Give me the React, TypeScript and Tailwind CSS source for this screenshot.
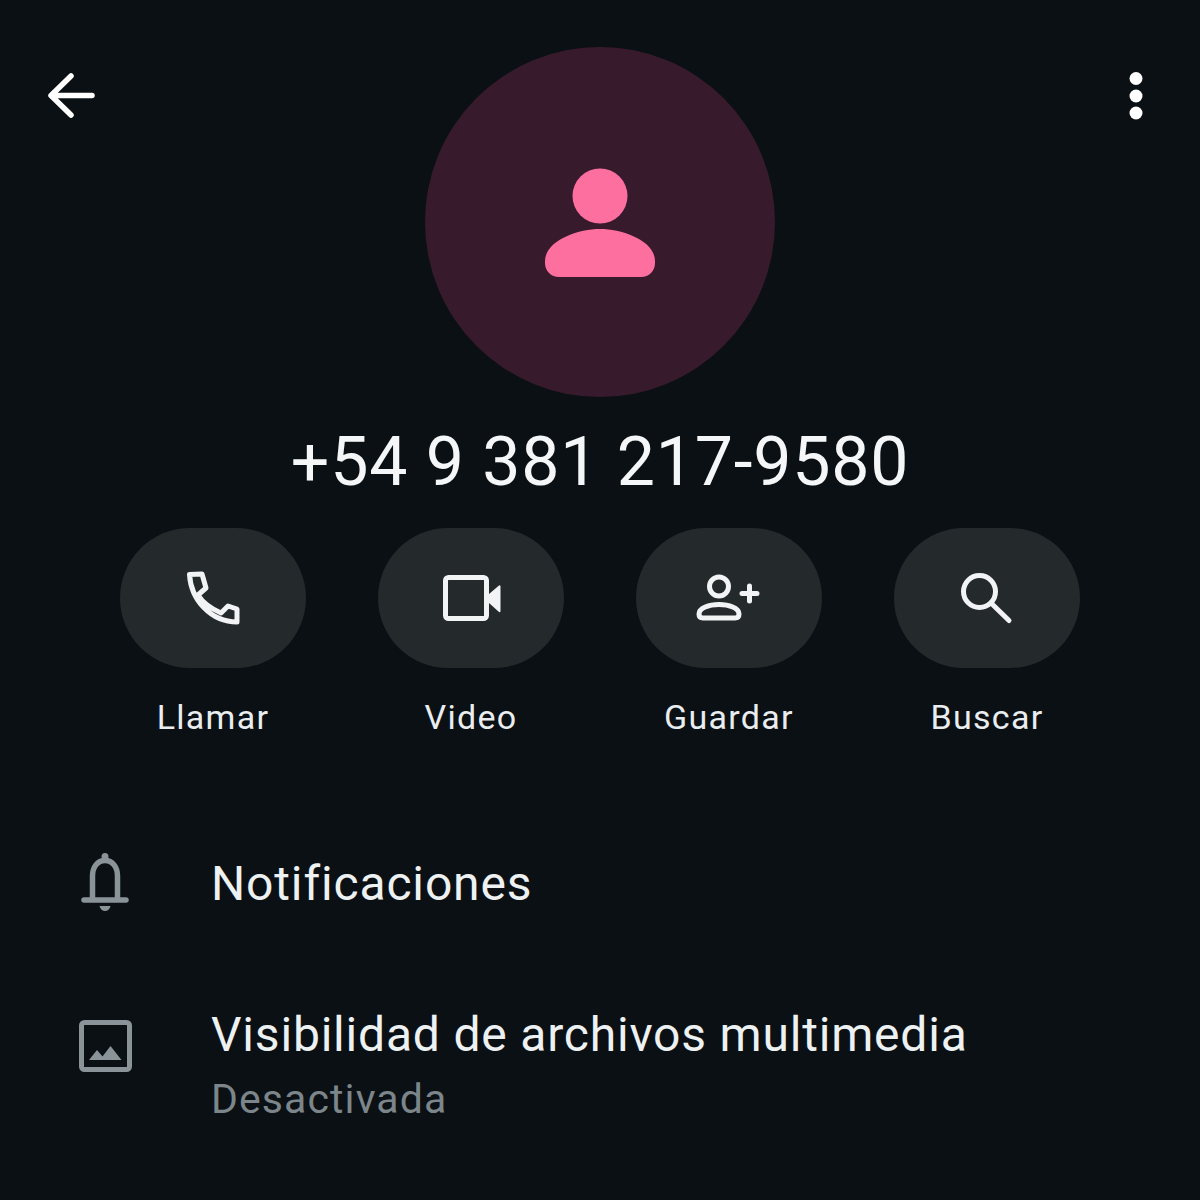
const ink = "#f1f3f4";
const gray = "#8a9498";

function ActionButton({ label, children }: { label: string; children: React.ReactNode }) {
  return (
    <div className="flex w-[186px] flex-col items-center">
      <div className="flex h-[140px] w-[186px] items-center justify-center rounded-[70px] bg-[#24292c]">{children}</div>
      <span className="mt-[29px] h-[40px] whitespace-nowrap text-[34px] leading-[40px] tracking-[1.3px] text-[#e9edef]">{label}</span>
    </div>
  );
}

export default function App() {
  return (
    <div className="flex h-[1200px] w-[1200px] flex-col overflow-hidden bg-[#0a1014] font-['Roboto',sans-serif]">
      <div className="flex items-start justify-between pt-[47px]">
        <div className="w-[100px] pl-[40px] pt-[18px]">
          <svg width="60" height="60" viewBox="40 65 60 60" fill="none" stroke="#ffffff" strokeWidth="5.5" strokeLinecap="round" strokeLinejoin="round">
            <path d="M92 95.5H52M71 76 51 95.5 71 115" />
          </svg>
        </div>
        <div className="flex h-[350px] w-[350px] items-center justify-center rounded-full bg-[#381a2d]">
          <svg width="120" height="120" viewBox="540 162 120 120" fill="#fd6f9f">
            <circle cx="600" cy="196" r="27.5" />
            <path d="M545 261c0-20 32-32 55-32s55 12 55 32v2c0 8-6 14-14 14H559c-8 0-14-6-14-14z" />
          </svg>
        </div>
        <div className="w-[100px] pl-[16px] pt-[18px]">
          <svg width="40" height="60" viewBox="1116 65 40 60" fill="#ffffff">
            <circle cx="1136" cy="78.5" r="6.5" />
            <circle cx="1136" cy="96" r="6.5" />
            <circle cx="1136" cy="113" r="6.5" />
          </svg>
        </div>
      </div>

      <div className="mt-[23px] h-[84px] whitespace-nowrap text-center text-[68px] leading-[84px] tracking-[0.75px] text-[#f4f6f7]">+54 9 381 217-9580</div>

      <div className="mt-[24px] flex justify-center gap-[72px]">
        <ActionButton label="Llamar">
          <svg width="70" height="70" viewBox="179 563 70 70" fill="none" stroke={ink} strokeWidth="5" strokeLinejoin="round">
            <path d="M190.500 574.500 203 574 207 588 199 595C204 603 213 609 222 613L229 606 238 609V622C212 622 192 600 190.500 574.500Z" />
          </svg>
        </ActionButton>
        <ActionButton label="Video">
          <svg width="70" height="70" viewBox="436 563 70 70" fill="none">
            <rect x="445.500" y="577.500" width="41" height="41" rx="3" stroke={ink} strokeWidth="5" />
            <path d="M489 594 499 585.500a1 1 0 0 1 1.500 1V611a1 1 0 0 1-1.500 1L489 603z" fill={ink} />
          </svg>
        </ActionButton>
        <ActionButton label="Guardar">
          <svg width="70" height="70" viewBox="695 563 70 70" fill="none" stroke={ink} strokeWidth="5" strokeLinecap="round">
            <circle cx="720" cy="586.500" r="9.500" />
            <path d="M700 614c0-6 10-9.500 20-9.500s20 3.500 20 9.500c0 2.500-1 4-4 4h-32c-3 0-4-1.500-4-4z" />
            <path d="M743 593.500h15M750.500 586v15" />
          </svg>
        </ActionButton>
        <ActionButton label="Buscar">
          <svg width="70" height="70" viewBox="952 563 70 70" fill="none" stroke={ink} strokeWidth="5" strokeLinecap="round">
            <circle cx="979.500" cy="591.500" r="16" />
            <path d="M991 603l18 17.500" />
          </svg>
        </ActionButton>
      </div>

      <div className="mt-[97px] flex h-[100px] items-center">
        <div className="flex w-[210px] justify-center">
          <svg width="60" height="70" viewBox="75 848 60 70" fill="none" stroke={gray} strokeWidth="5.500" strokeLinecap="round">
            <path d="M92.500 898V875c0-9 5-15.500 12.500-15.500s12.500 6.500 12.500 15.500v23" />
            <path d="M84 899h42" />
            <circle cx="105" cy="855.500" r="2.500" fill={gray} strokeWidth="2" />
            <path d="M99.500 905h11c-.5 3-3 5-5.500 5s-5-2-5.500-5z" fill={gray} stroke="none" />
          </svg>
        </div>
        <span className="pl-[1px] text-[48px] leading-[60px] tracking-[0.85px] text-[#eef1f2]">Notificaciones</span>
      </div>

      <div className="mt-[69px] flex">
        <div className="flex w-[211px] justify-center pr-[2px] pt-[13px]">
          <svg width="60" height="60" viewBox="75 1016 60 60" fill="none">
            <rect x="81.500" y="1022.500" width="48" height="47" rx="3" stroke={gray} strokeWidth="5" />
            <path d="M89 1060l8-10 5.500 6.500 8-10.500 11 14z" fill={gray} />
          </svg>
        </div>
        <div className="flex flex-col">
          <span className="h-[64px] whitespace-nowrap text-[48px] leading-[64px] tracking-[0.8px] text-[#eef1f2]">Visibilidad de archivos multimedia</span>
          <span className="h-[64px] whitespace-nowrap text-[41px] leading-[64px] tracking-[1.1px] text-[#7c868a]">Desactivada</span>
        </div>
      </div>
    </div>
  );
}
